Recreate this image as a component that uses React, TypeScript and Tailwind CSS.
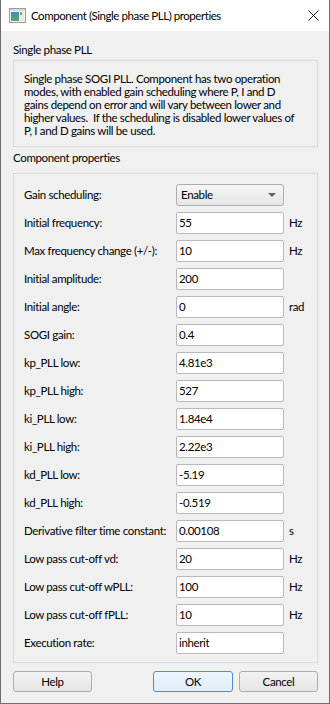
import React from "react";

const rows: { label: string; value: string; unit?: string; combo?: boolean }[] = [
  { label: "Gain scheduling:", value: "Enable", combo: true },
  { label: "Initial frequency:", value: "55", unit: "Hz" },
  { label: "Max frequency change (+/-):", value: "10", unit: "Hz" },
  { label: "Initial amplitude:", value: "200" },
  { label: "Initial angle:", value: "0", unit: "rad" },
  { label: "SOGI gain:", value: "0.4" },
  { label: "kp_PLL low:", value: "4.81e3" },
  { label: "kp_PLL high:", value: "527" },
  { label: "ki_PLL low:", value: "1.84e4" },
  { label: "ki_PLL high:", value: "2.22e3" },
  { label: "kd_PLL low:", value: "-5.19" },
  { label: "kd_PLL high:", value: "-0.519" },
  { label: "Derivative filter time constant:", value: "0.00108", unit: "s" },
  { label: "Low pass cut-off vd:", value: "20", unit: "Hz" },
  { label: "Low pass cut-off wPLL:", value: "100", unit: "Hz" },
  { label: "Low pass cut-off fPLL:", value: "10", unit: "Hz" },
  { label: "Execution rate:", value: "inherit" },
];

const desc = [
  "Single phase SOGI PLL. Component has two operation",
  "modes, with enabled gain scheduling where P, I and D",
  "gains depend on error and will vary between lower and",
  "higher values.  If the scheduling is disabled lower values of",
  "P, I and D gains will be used.",
];

export default function App() {
  return (
    <div
      className="w-[330px] h-[704px] flex flex-col bg-[#f0f0f0] border-x border-b border-[#6f6f6f] text-[11.5px] tracking-[-0.35px] text-black"
      style={{ fontFamily: 'Lato, "Noto Sans", sans-serif' }}
    >
      {/* Title bar */}
      <div className="h-[31px] shrink-0 bg-white flex items-center relative">
        <svg className="ml-[8px]" width="17" height="15" viewBox="0 0 17 15">
          <rect x="0.5" y="0.5" width="16" height="14" fill="#f4f4f4" stroke="#9a9a9a" />
          <rect x="1" y="1" width="15" height="2" fill="#d8d8d8" />
          <defs>
            <linearGradient id="g1" x1="0" y1="0" x2="0" y2="1">
              <stop offset="0" stopColor="#3a8fc0" />
              <stop offset="1" stopColor="#5aa85a" />
            </linearGradient>
          </defs>
          <rect x="2" y="4" width="8" height="9" fill="url(#g1)" />
          <rect x="11" y="4" width="4" height="9" fill="#e4e8e4" />
          <rect x="11" y="4" width="2" height="3" fill="#7ab07a" />
        </svg>
        <span className="ml-[5px] leading-[16px] text-[11.5px] tracking-[-0.45px]">Component (Single phase PLL) properties</span>
        <svg className="absolute left-[307px] top-[10px]" width="11" height="11" viewBox="0 0 11 11">
          <path d="M0.5 0.5 L10.5 10.5 M10.5 0.5 L0.5 10.5" stroke="#111" strokeWidth="1" />
        </svg>
      </div>

      <div className="flex flex-col pl-[12px] pr-[11px]">
        <div className="mt-[11px] h-[16px] leading-[16px]">Single phase PLL</div>
        <div className="mt-[2px] h-[87px] border border-[#dcdcdc] pl-[10px] pt-[11px]">
          {desc.map((l, i) => (
            <div key={i} className="h-[13px] leading-[13px] whitespace-pre">
              {l}
            </div>
          ))}
        </div>

        <div className="mt-[3px] h-[16px] leading-[16px]">Component properties</div>
        <div className="mt-[7px] h-[490px] border border-[#dcdcdc] pl-[10px] pt-[10px] flex flex-col gap-[6px]">
          {rows.map((r, i) => (
            <div key={i} className="h-[22px] flex items-center">
              <div className="w-[152px] leading-[16px] whitespace-nowrap">{r.label}</div>
              {r.combo ? (
                <div className="w-[108px] h-[22px] rounded-[3px] border border-[#adadad] bg-gradient-to-b from-[#f6f6f6] to-[#e6e6e6] flex items-center pl-[4px] pr-[7px]">
                  <span className="flex-1 leading-[16px]">{r.value}</span>
                  <svg width="8" height="4" viewBox="0 0 8 4">
                    <path d="M0 0 L8 0 L4 4 Z" fill="#606060" />
                  </svg>
                </div>
              ) : (
                <div className="w-[108px] h-[22px] rounded-[2px] border border-[#b9b9b9] bg-white flex items-center pl-[2px]">
                  <span className="leading-[16px]">{r.value}</span>
                </div>
              )}
              {r.unit && <span className="ml-[5px] leading-[16px]">{r.unit}</span>}
            </div>
          ))}
        </div>

        <div className="mt-[8px] h-[21px] flex">
          <div className="w-[79px] h-[21px] rounded-[3px] border border-[#adadad] bg-gradient-to-b from-[#f2f2f2] to-[#e5e5e5] flex items-center justify-center leading-[16px]">
            Help
          </div>
          <div className="ml-[61px] w-[80px] h-[21px] rounded-[3px] border border-[#4a90d0] bg-gradient-to-b from-[#eef5fc] to-[#e2eefa] flex items-center justify-center leading-[16px]">
            OK
          </div>
          <div className="ml-[6px] w-[79px] h-[21px] rounded-[3px] border border-[#adadad] bg-gradient-to-b from-[#f2f2f2] to-[#e5e5e5] flex items-center justify-center leading-[16px]">
            Cancel
          </div>
        </div>
      </div>
    </div>
  );
}
